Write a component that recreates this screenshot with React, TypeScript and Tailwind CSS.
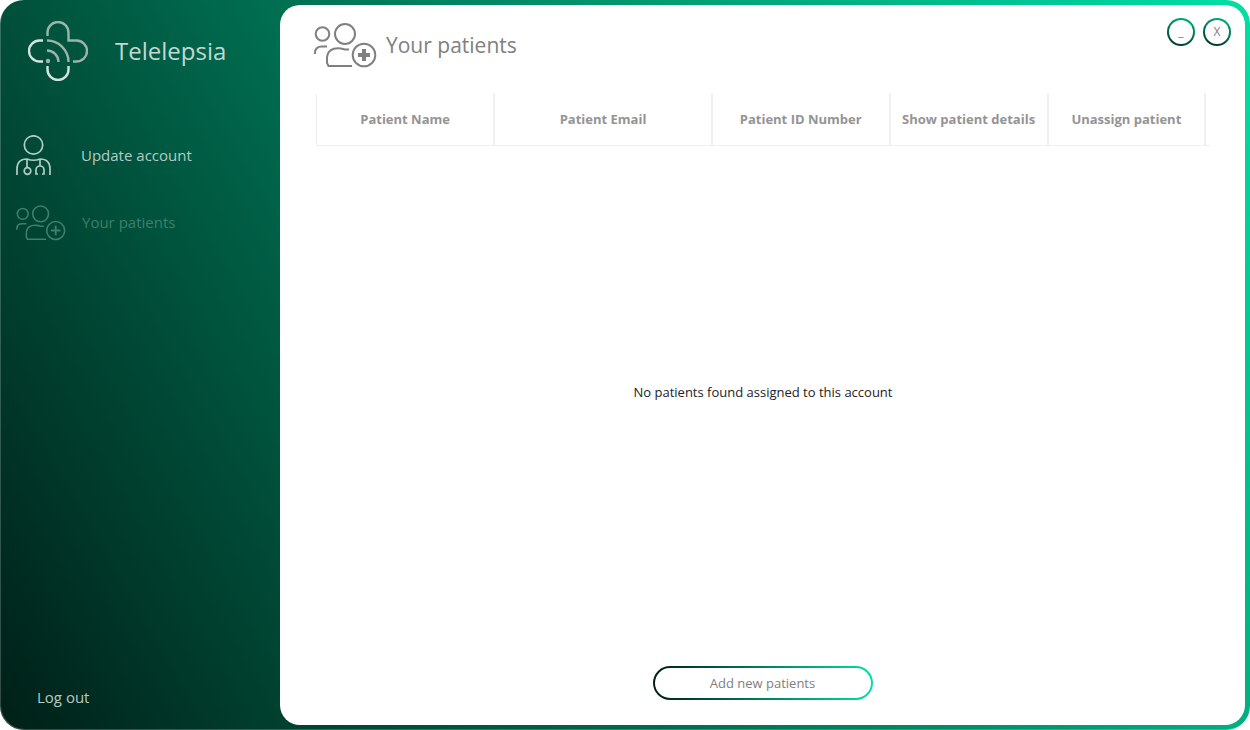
import React from "react";

const HEADERS = [
  { label: "Patient Name", width: "w-[20%]" },
  { label: "Patient Email", width: "w-[24.5%]" },
  { label: "Patient ID Number", width: "w-[20%]" },
  { label: "Show patient details", width: "w-[17.8%]" },
  { label: "Unassign patient", width: "w-[17.7%]" },
];

function Logo() {
  return (
    <svg viewBox="0 0 60 60" className="size-[60px] shrink-0" fill="none" strokeWidth="2.4" aria-hidden="true">
      <g stroke="#9db3ab">
        <path d="M19.5 15V11.500a10.500 10.500 0 0 1 21 0V19.500H48.500a10.500 10.500 0 0 1 0 21H45" />
        <path d="M19 19.500A21.500 21.500 0 0 1 40.500 41" />
        <path d="M19 29.500A11.500 11.500 0 0 1 30.500 41" />
      </g>
      <circle cx="20" cy="40" r="2.200" fill="#9db3ab" />
      <g stroke="#d5e3df">
        <path d="M15 19.500H11.500a10.500 10.500 0 0 0 0 21H15" />
        <path d="M19.500 45V48.500a10.500 10.500 0 0 0 21 0V45" />
      </g>
    </svg>
  );
}

function DoctorIcon() {
  return (
    <svg viewBox="0 0 36 41" className="h-[41px] w-9 shrink-0" fill="none" stroke="currentColor" strokeWidth="1.7" aria-hidden="true">
      <circle cx="17.500" cy="10" r="9.200" />
      <path d="M1 40V34Q1 24 11 24Q17.500 26.500 24 24Q34 24 34 34V40" />
      <path d="M11 24V33M24 24V31" />
      <circle cx="11.500" cy="36" r="3.300" />
      <path d="M22 39H20V35a4 4 0 0 1 8 0V39H26" />
    </svg>
  );
}

function PatientsIcon({ className, stroke, plus }: { className: string; stroke: number; plus: number }) {
  return (
    <svg viewBox="0 0 63 45" className={className} fill="none" stroke="currentColor" strokeWidth={stroke} aria-hidden="true">
      <circle cx="8.500" cy="11" r="6.800" />
      <circle cx="31" cy="11" r="10" />
      <path d="M1 31V30Q1 23.500 8 23.500H13" />
      <path d="M35 26.500H31L27 25.500Q13 24 13 36V40L14.500 43H38" />
      <circle cx="50" cy="32" r="11.300" />
      <path d="M50 26V38M44 32H56" strokeWidth={plus} />
    </svg>
  );
}

export default function App() {
  return (
    <div className="flex min-h-screen rounded-[24px] bg-[linear-gradient(60deg,#001f17,#00e0a4)] font-['Open_Sans','Noto_Sans',sans-serif] shadow-[inset_1px_-1px_0_rgba(255,255,255,0.2)]">
      <aside className="flex w-[280px] shrink-0 flex-col">
        <div className="flex h-[102px] items-center gap-[27px] pl-7">
          <Logo />
          <span className="text-2xl text-[#c4d8d1]">Telelepsia</span>
        </div>
        <nav className="mt-5 flex flex-col">
          <button className="flex h-[67px] items-center gap-[29px] pl-4 text-[15px] text-[#b3ccc4]">
            <DoctorIcon />
            Update account
          </button>
          <button className="flex h-[67px] items-center gap-4 pl-4 text-[15px] text-[#3f7f6b]">
            <PatientsIcon className="h-9 w-[50px] shrink-0" stroke={2} plus={2.4} />
            Your patients
          </button>
        </nav>
        <button className="mt-auto mb-[22px] ml-[37px] self-start text-[15px] text-[#b3ccc4]">Log out</button>
      </aside>

      <main className="my-[5px] mr-[5px] flex flex-1 flex-col rounded-[20px] bg-white">
        <header className="flex h-[88px] items-start justify-between pt-[13px] pr-[14px] pl-[34px]">
          <div className="flex items-center gap-[9px] pt-[5px] text-[#808080]">
            <PatientsIcon className="h-[45px] w-[63px] shrink-0" stroke={2} plus={4} />
            <h1 className="text-[21px]">Your patients</h1>
          </div>
          <div className="flex gap-2 text-xs text-[#808080]">
            <button aria-label="Minimize" className="flex size-7 rounded-full bg-[linear-gradient(20deg,#002a1f,#00b887)] p-[2px]">
              <span className="flex size-full items-center justify-center rounded-full bg-white">_</span>
            </button>
            <button aria-label="Close" className="flex size-7 rounded-full bg-[linear-gradient(20deg,#002a1f,#00b887)] p-[2px]">
              <span className="flex size-full items-center justify-center rounded-full bg-white">X</span>
            </button>
          </div>
        </header>

        <section className="mr-[35px] ml-9 flex flex-1 flex-col">
          <div className="border-b border-[#f0f0f0] pr-1">
            <table className="w-full table-fixed border-l border-[#f0f0f0]">
              <thead>
                <tr>
                  {HEADERS.map((h) => (
                    <th key={h.label} className={`${h.width} h-[52px] border-r-2 border-[#f0f0f0] p-0 pt-px text-[13px] font-bold text-[#949494]`}>
                      {h.label}
                    </th>
                  ))}
                </tr>
              </thead>
            </table>
          </div>
          <p className="my-auto pb-[26px] text-center text-[13px] text-[#222222]">No patients found assigned to this account</p>
        </section>

        <footer className="flex justify-center pb-[25px]">
          <button className="flex h-[34px] w-[220px] rounded-full bg-[linear-gradient(90deg,#001f17,#00e0a4)] p-[2px] text-[13px] text-[#808080]">
            <span className="flex size-full items-center justify-center rounded-full bg-white pt-px">Add new patients</span>
          </button>
        </footer>
      </main>
    </div>
  );
}
